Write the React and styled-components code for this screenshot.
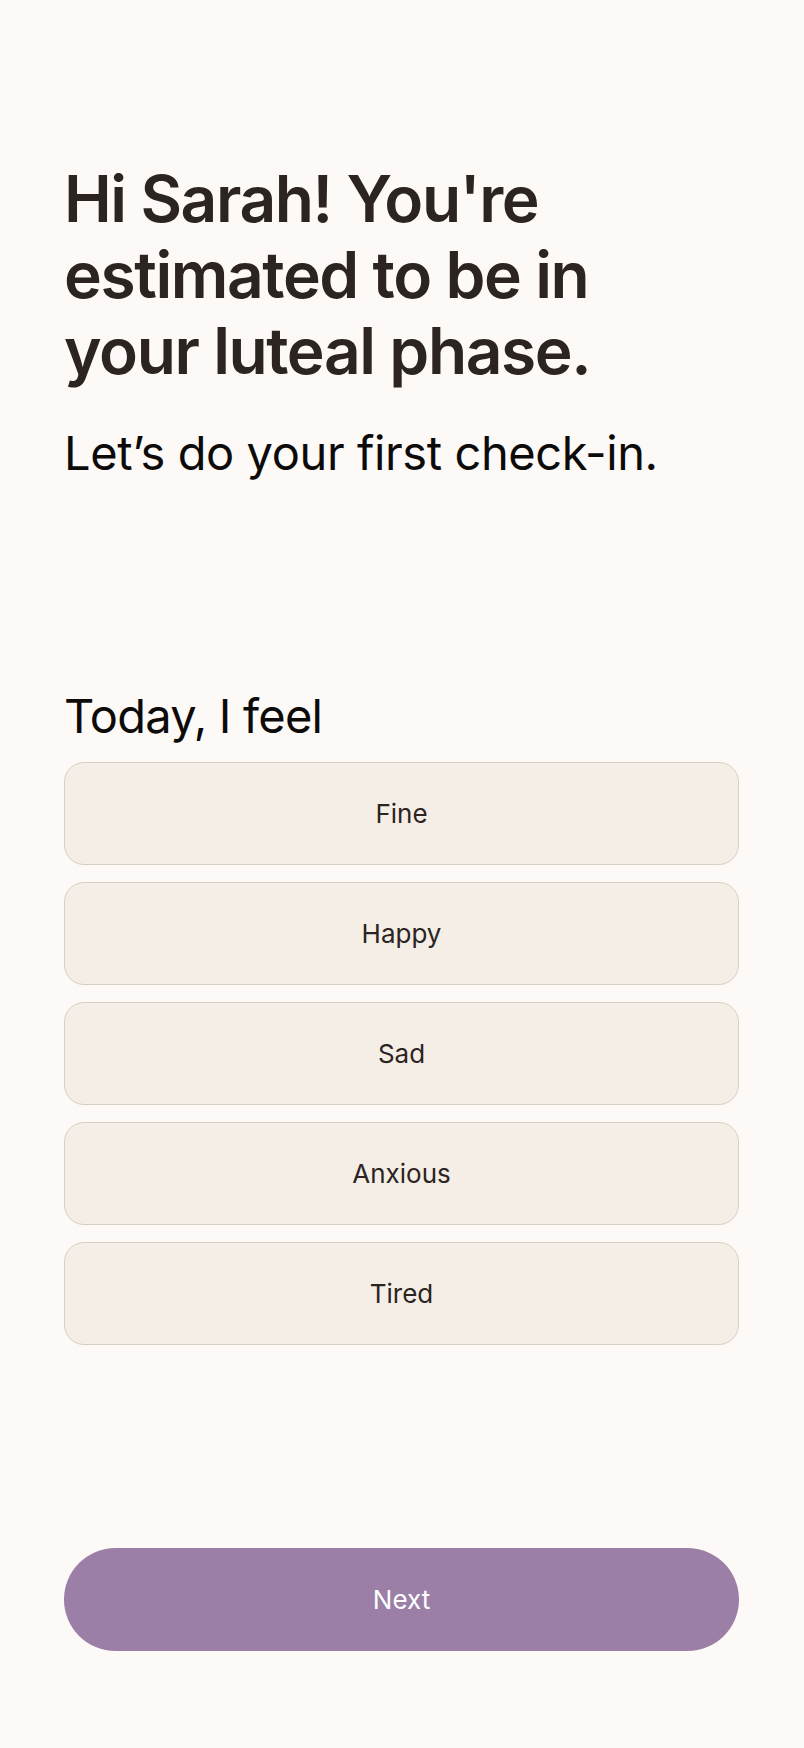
import React from "react";
import styled, { createGlobalStyle } from "styled-components";

const GlobalStyle = createGlobalStyle`
  html, body {
    margin: 0;
    padding: 0;
    background: #fdf9f6;
  }
  body {
    font-family: Inter, "Noto Sans", "Liberation Sans", sans-serif;
    -webkit-font-smoothing: antialiased;
  }
  * {
    box-sizing: border-box;
  }
`;

const moods = ["Fine", "Happy", "Sad", "Anxious", "Tired"];

export default function App() {
  const [selected, setSelected] = React.useState(null);

  return (
    <>
      <GlobalStyle />
      <Screen>
        <Intro>
          <Title>Hi Sarah! You're estimated to be in your luteal phase.</Title>
          <Subtitle>Let’s do your first check-in.</Subtitle>
        </Intro>

        <Question>
          <Label>Today, I feel</Label>
          <Options>
            {moods.map((mood) => (
              <Option
                key={mood}
                $active={selected === mood}
                onClick={() => setSelected(mood)}
              >
                {mood}
              </Option>
            ))}
          </Options>
        </Question>

        <NextButton>Next</NextButton>
      </Screen>
    </>
  );
}

const Screen = styled.main`
  min-height: 1748px;
  display: flex;
  flex-direction: column;
  padding: 161px 65px 97px 64px;
  background: #fdf9f6;
`;

const Intro = styled.section`
  display: flex;
  flex-direction: column;
  gap: 36px;
`;

const Title = styled.h1`
  margin: 0;
  font-size: 64px;
  line-height: 76px;
  font-weight: 600;
  letter-spacing: -1.4px;
  color: #2b2421;
  max-width: 560px;
`;

const Subtitle = styled.p`
  margin: 0;
  font-size: 47px;
  line-height: 56px;
  font-weight: 400;
  letter-spacing: -0.4px;
  color: #0d0b0a;
`;

const Question = styled.section`
  margin-top: 207px;
  display: flex;
  flex-direction: column;
  gap: 18px;
`;

const Label = styled.h2`
  margin: 0;
  font-size: 47px;
  line-height: 56px;
  font-weight: 400;
  letter-spacing: -0.8px;
  color: #0d0b0a;
`;

const Options = styled.div`
  display: flex;
  flex-direction: column;
  gap: 17px;
`;

const Option = styled.button`
  height: 103px;
  width: 100%;
  border: 1.5px solid ${(p) => (p.$active ? "#9b7fa6" : "#d9cec2")};
  border-radius: 20px;
  background: #f5eee7;
  font-family: inherit;
  font-size: 26px;
  color: #2b2421;
  cursor: pointer;
`;

const NextButton = styled.button`
  margin-top: auto;
  height: 103px;
  width: 100%;
  border: none;
  border-radius: 52px;
  background: #9b7fa6;
  color: #ffffff;
  font-family: inherit;
  font-size: 26px;
  cursor: pointer;
`;
